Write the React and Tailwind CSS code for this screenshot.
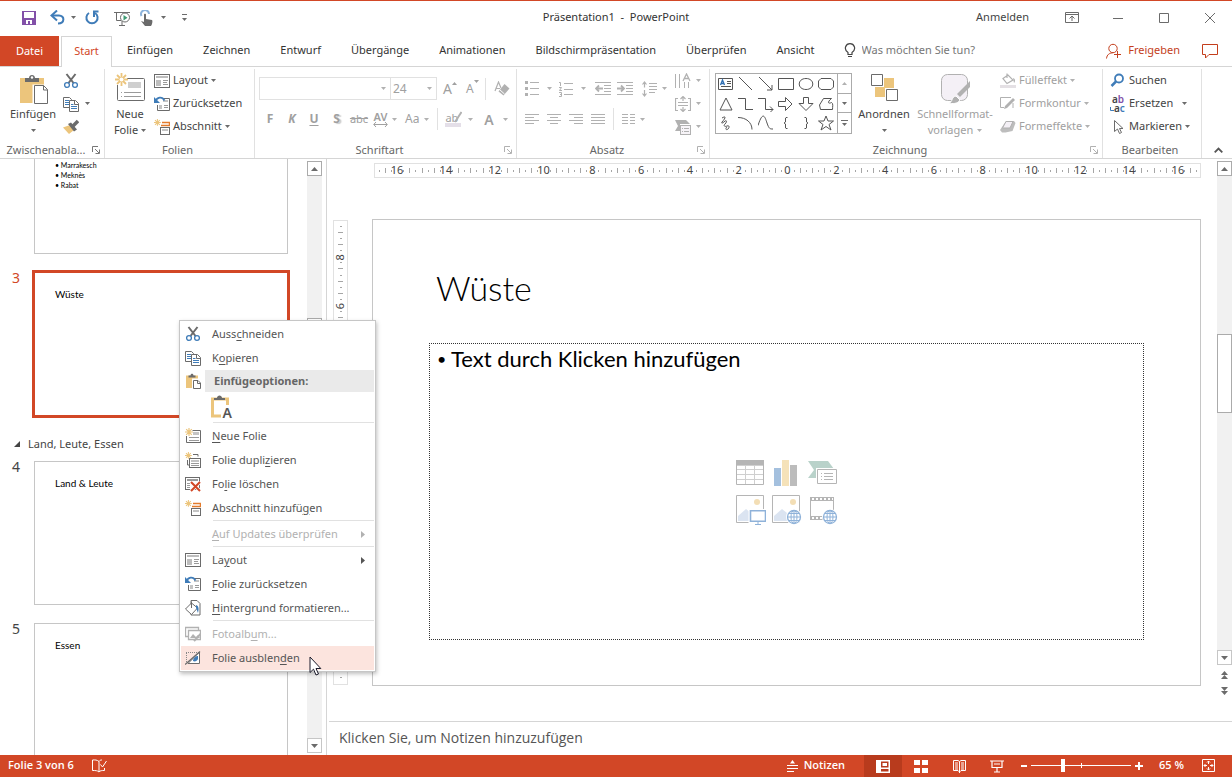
import React, { useState } from 'react';

const tabs = ['Einfügen', 'Zeichnen', 'Entwurf', 'Übergänge', 'Animationen', 'Bildschirmpräsentation', 'Überprüfen', 'Ansicht'];

const Icon = ({ w = 16, h = 16, className = '', children }) => (
  <svg width={w} height={h} viewBox={`0 0 ${w} ${h}`} fill="none" className={`shrink-0 ${className}`} aria-hidden="true">
    {children}
  </svg>
);

const Caret = ({ className = 'text-[#6b6b6b]' }) => (
  <Icon w={5} h={3} className={className}>
    <path d="M0 0h5L2.500 3z" fill="currentColor" />
  </Icon>
);

/* ---------- shared icons ---------- */

const CutIcon = () => (
  <Icon>
    <path d="M3.500 1l7 9M12.500 1l-7 9" stroke="#6b6b6b" strokeWidth="2" />
    <circle cx="4" cy="12" r="2.4" stroke="#3f7cb8" strokeWidth="1.3" />
    <circle cx="12" cy="12" r="2.4" stroke="#3f7cb8" strokeWidth="1.3" />
  </Icon>
);

const CopyIcon = () => (
  <Icon>
    <path d="M.5 1.500h6l2 2v8h-8z" fill="#fff" stroke="#6b6b6b" />
    <path d="M2 4.500h4M2 6.500h4M2 8.500h4" stroke="#3f7cb8" />
    <path d="M6.500 4.500h6l3 3v8h-9z" fill="#fff" stroke="#6b6b6b" />
    <path d="M11.500 4.500v4H15" stroke="#6b6b6b" />
    <path d="M8 8.500h2.500M8 10.500h6M8 12.500h6" stroke="#3f7cb8" />
  </Icon>
);

const PainterIcon = () => (
  <Icon>
    <path d="M0 8.500l7-2.500 4 5-5 4z" fill="#ecc57c" />
    <path d="M5 5l3-1.500 6 7-3 2z" fill="#6b6b6b" />
    <path d="M10 7l5-5" stroke="#6b6b6b" strokeWidth="3.500" />
  </Icon>
);

const PasteBigIcon = () => (
  <Icon w={30} h={32}>
    <path d="M2 5h24v25H2z" fill="#ecc57c" />
    <path d="M7 9V5h4c0-4 6-4 6 0h4v4z" fill="#6b6b6b" />
    <circle cx="14" cy="4.500" r="1.200" fill="#fff" />
    <path d="M14.500 11.500h12l4 4v16h-16z" fill="#fff" />
    <path d="M16.500 12.500h9l4 4v14h-13z" fill="#fff" stroke="#6b6b6b" />
    <path d="M25.500 12.500v4.500h4" stroke="#6b6b6b" />
  </Icon>
);

const PasteIcon = () => (
  <Icon>
    <path d="M1 2.500h12v12.500H1z" fill="#ecc57c" />
    <path d="M3.500 4.500V2.500h2c0-2.500 3-2.500 3 0h2v2z" fill="#6b6b6b" />
    <path d="M7 5.500h9v10.500H7z" fill="#fff" />
    <path d="M8.500 7.500h4.500l2.500 2.500v5.500h-7z" fill="#fff" stroke="#6b6b6b" />
    <path d="M12.500 7.500v3h3" stroke="#6b6b6b" />
  </Icon>
);

const Star = () => (
  <path d="M4 0v8M0 4h8M1.200 1.200l5.600 5.600M6.800 1.200L1.200 6.800" stroke="#ecc57c" strokeWidth="1.200" />
);

const NewSlideBigIcon = () => (
  <Icon w={31} h={28}>
    <rect x="2.500" y="5.500" width="27" height="22" rx="1" stroke="#6b6b6b" />
    <path d="M13 9h13v6H13z" fill="#cfcfcf" />
    <path d="M6 19.500h1M9 19.500h17M6 23.500h1M9 23.500h17" stroke="#9a9a9a" />
    <path d="M0 0h12v12H0z" fill="#fff" />
    <path d="M6.500 0v13M0 6.500h13M2 2l9 9M11 2l-9 9" stroke="#ecc57c" strokeWidth="1.800" />
    <circle cx="6.500" cy="6.500" r="2" fill="#fff" />
  </Icon>
);

const NewSlideIcon = () => (
  <Icon>
    <path d="M7.500 2.500h8v12h-14V8" stroke="#6b6b6b" />
    <path d="M8 4h6v3H8z" fill="#c4c4c4" />
    <path d="M4 9.500h10M4 12.500h10" stroke="#9a9a9a" />
    <Star />
  </Icon>
);

const LayoutIcon = () => (
  <Icon>
    <rect x=".5" y="1.500" width="15" height="13" stroke="#6b6b6b" />
    <path d="M2 3h12v2H2zM2 7h5v6H2z" fill="#bdbdbd" />
    <path d="M9 7.500h5M9 9.500h4M9 11.500h5" stroke="#9a9a9a" />
  </Icon>
);

const ResetIcon = () => (
  <Icon>
    <path d="M9 2.500h6.500v12h-12V9" stroke="#6b6b6b" />
    <path d="M9 4h5v2H9zM5 9h3v4H5z" fill="#c4c4c4" />
    <path d="M10 9.500h4M10 11.500h4" stroke="#9a9a9a" />
    <path d="M1.500 5.500C3 1 8 0 10.500 4.500" stroke="#3f7cb8" strokeWidth="1.800" />
    <path d="M0 1v6h6z" fill="#3f7cb8" />
  </Icon>
);

const SectionIcon = () => (
  <Icon>
    <path d="M8 3.500h7.500v3H7" stroke="#e37b2c" strokeWidth="1.400" />
    <rect x="6.500" y="8.500" width="9" height="7" stroke="#6b6b6b" />
    <path d="M8 10h6v2H8z" fill="#c4c4c4" />
    <g transform="scale(.85)"><Star /></g>
  </Icon>
);

/* ---------- title bar ---------- */

const TitleBar = () => (
  <header className="grid h-[35px] grid-cols-[1fr_auto_1fr] items-center pb-[2px]">
    <div className="flex items-center pl-[21px]">
      <button aria-label="Speichern">
        <Icon>
          <path d="M1 1h14v14H1z" fill="#8250a8" />
          <path d="M3 2h10v6H3zM5 10h6v4H9v-3H7v3H5z" fill="#fff" />
        </Icon>
      </button>
      <button aria-label="Rückgängig" className="ml-[13px] flex items-center gap-[5px]">
        <Icon w={16}>
          <path d="M3 5.500h6c6 0 6 8-1 8" stroke="#3f7cb8" strokeWidth="2" />
          <path d="M7 .5L1.500 5.500 7 10.500" stroke="#3f7cb8" strokeWidth="2" />
        </Icon>
        <Caret />
      </button>
      <button aria-label="Wiederholen" className="ml-[8px]">
        <Icon>
          <path d="M5 3A5.600 5.600 0 1 0 11 3" stroke="#3f7cb8" strokeWidth="2" />
          <path d="M9 1.500h5.500M10 1v6" stroke="#3f7cb8" strokeWidth="2" />
        </Icon>
      </button>
      <button aria-label="Von Beginn an" className="ml-[14px]">
        <Icon w={18}>
          <path d="M0 2.500h16M2.500 3v7.500H7M5 15.500h6M8 11v4" stroke="#6b6b6b" />
          <circle cx="11" cy="7.500" r="4.500" fill="#fff" stroke="#6b6b6b" />
          <path d="M9.500 5v5.500l4-2.700z" fill="#3f9b74" />
        </Icon>
      </button>
      <button aria-label="Touch-/Mausmodus" className="ml-[8px] flex items-center gap-[5px]">
        <Icon>
          <path d="M1.500 6A4 4 0 1 1 9 4" stroke="#8db4dc" strokeWidth="2" />
          <path d="M4 4.500c0-1 2-1 2 0V9l6 1c1 1 0 5-1 6H5L1 11l3 1z" fill="#6b6b6b" />
        </Icon>
        <Caret />
      </button>
      <button aria-label="Schnellzugriff anpassen" className="ml-[16px] flex flex-col items-center gap-[3px]">
        <span className="h-px w-[5px] bg-[#6b6b6b]" />
        <Caret />
      </button>
    </div>
    <h1 className="whitespace-pre">Präsentation1  -  PowerPoint</h1>
    <div className="flex items-center justify-end pr-[17px] text-[#6b6b6b]">
      <button className="mr-[36px] text-[#444]">Anmelden</button>
      <button aria-label="Menüband-Anzeigeoptionen">
        <Icon w={14} h={11}>
          <path d="M.5.5h13v10H.5zM0 2.500h14M7 4v5M4.500 6.500L7 4l2.500 2.500" stroke="currentColor" />
        </Icon>
      </button>
      <button aria-label="Minimieren" className="ml-[34px]"><Icon w={10} h={10}><path d="M0 5.500h10" stroke="currentColor" /></Icon></button>
      <button aria-label="Maximieren" className="ml-[36px]"><Icon w={10} h={10}><path d="M.5.5h9v9h-9z" stroke="currentColor" /></Icon></button>
      <button aria-label="Schließen" className="ml-[36px]"><Icon w={10} h={10}><path d="M0 0l10 10M10 0L0 10" stroke="currentColor" /></Icon></button>
    </div>
  </header>
);

const TabBar = () => (
  <nav className="flex h-[30px]">
    <button className="mr-[2px] w-[59px] bg-[#d24726] text-white">Datei</button>
    <button className="relative -mb-px w-[51px] border border-b-0 border-[#d5d5d5] bg-white pb-[2px] text-[#d24726]">Start</button>
    <div className="flex gap-[30px] pb-px pl-[15px]">
      {tabs.map((tab) => (
        <button key={tab}>{tab}</button>
      ))}
    </div>
    <label className="ml-[29px] flex flex-1 items-center gap-[6px] pb-px">
      <Icon w={12} h={15}>
        <path d="M4 11.500V9.500C-1 6 2 .7 6 .7s7 5.300 2 8.800v2zM4 13.500h4" stroke="#444" strokeWidth="1.200" />
      </Icon>
      <input type="text" aria-label="Was möchten Sie tun?" placeholder="Was möchten Sie tun?" className="min-w-0 flex-1 outline-none placeholder:text-[#767676]" />
    </label>
    <button className="mr-[22px] flex items-center gap-[7px] pb-px text-[#c43e1c]">
      <Icon w={15} h={16}>
        <circle cx="7" cy="5.500" r="4.200" stroke="currentColor" />
        <path d="M.5 15.500c.5-4 3-5.500 6-5.500M8 11.500h7M11.500 8v7" stroke="currentColor" />
      </Icon>
      Freigeben
    </button>
    <button aria-label="Kommentare" className="mr-[14px] text-[#c43e1c]">
      <Icon w={16} h={15}><path d="M.5.5h15v10H7l-3.500 3.500v-3.500h-3z" stroke="currentColor" /></Icon>
    </button>
  </nav>
);

/* ---------- ribbon ---------- */

const Launcher = ({ label, className = 'text-[#777]' }) => (
  <button aria-label={label} className={className}>
    <Icon w={8} h={8}>
      <path d="M.5 6V.5H6M3 3l4 4M7.500 3.500v4h-4" stroke="currentColor" />
    </Icon>
  </button>
);

const Group = ({ label, launcher, launcherClass, className, children }) => (
  <section className={`flex flex-col border-r border-[#e1e1e1] ${className}`}>
    <div className="flex h-[73px]">{children}</div>
    <div className="flex h-[16px] items-center pr-[4px]">
      <span className="min-w-0 flex-1 whitespace-nowrap text-center leading-[16px] text-[#666]">{label}</span>
      {launcher && <Launcher label={launcher} className={launcherClass} />}
    </div>
  </section>
);

const RowButton = ({ icon, label, caret, wide, disabled }) => (
  <button disabled={disabled} className={`flex h-[23px] items-center gap-[3px] whitespace-nowrap ${disabled ? 'text-[#a0a0a0]' : 'text-[#444]'}`}>
    {icon}
    {label}
    {caret && <Caret className={`${wide ? 'ml-[6px]' : ''} ${disabled ? 'text-[#b1b1b1]' : 'text-[#6b6b6b]'}`} />}
  </button>
);

const ClipboardGroup = () => (
  <Group label="Zwischenabla..." launcher="Zwischenablage" className="w-[105px]">
    <button className="ml-[8px] mt-[4px] flex w-[50px] flex-col items-center self-start whitespace-nowrap">
      <PasteBigIcon />
      <span className="mt-px leading-[16px]">Einfügen</span>
      <Caret className="mt-[7px] text-[#6b6b6b]" />
    </button>
    <div className="ml-[5px] flex flex-col">
      <button aria-label="Ausschneiden" className="flex h-[23px] items-center"><CutIcon /></button>
      <button aria-label="Kopieren" className="flex h-[23px] items-center gap-[6px]"><CopyIcon /><Caret /></button>
      <button aria-label="Format übertragen" className="flex h-[23px] items-center"><PainterIcon /></button>
    </div>
  </Group>
);

const SlidesGroup = () => (
  <Group label="Folien" className="w-[150px]">
    <button className="ml-[6px] mt-[4px] flex w-[38px] flex-col items-center self-start whitespace-nowrap leading-[16px]">
      <NewSlideBigIcon />
      <span className="mt-[5px]">Neue</span>
      <span className="flex items-center gap-[3px]">Folie <Caret /></span>
    </button>
    <div className="ml-[5px] flex flex-col">
      <RowButton icon={<LayoutIcon />} label="Layout" caret />
      <RowButton icon={<ResetIcon />} label="Zurücksetzen" />
      <RowButton icon={<SectionIcon />} label="Abschnitt" caret />
    </div>
  </Group>
);

const FontGroup = () => (
  <Group label="Schriftart" launcher="Schriftart" launcherClass="text-[#b1b1b1]" className="w-[262px] text-[#a0a0a0]">
    <div className="flex flex-col pl-[4px]">
      <div className="mt-[8px] flex h-[23px] items-center">
        <span className="flex h-[23px] w-[132px] items-center border border-[#e1e1e1] pr-[4px]">
          <select aria-label="Schriftart" disabled className="flex-1 appearance-none"><option></option></select>
          <Caret className="text-[#b1b1b1]" />
        </span>
        <span className="-ml-px flex h-[23px] w-[47px] items-center border border-[#e1e1e1] pl-[2px] pr-[4px]">
          <select aria-label="Schriftgrad" disabled className="min-w-0 flex-1 appearance-none text-[12px]"><option>24</option></select>
          <Caret className="text-[#b1b1b1]" />
        </span>
        <button disabled aria-label="Schriftgrad vergrößern" className="ml-[6px] flex items-start text-[14px] leading-[16px]">A<Icon w={5} h={3} className="mt-px"><path d="M0 3h5L2.500 0z" fill="currentColor" /></Icon></button>
        <button disabled aria-label="Schriftgrad verkleinern" className="ml-[9px] flex items-start text-[12px] leading-[16px]">A<Caret className="-mt-px text-[#a0a0a0]" /></button>
        <span className="ml-[6px] h-[22px] w-px bg-[#e1e1e1]" />
        <button disabled aria-label="Formatierung löschen" className="ml-[8px]">
          <Icon>
            <path d="M1 10L4.500 1 7 7M2 7.500h4" stroke="#b1b1b1" strokeWidth="1.200" />
            <path d="M10.500 3l5 4.500-6 7-5-4z" fill="#b1b1b1" />
            <path d="M5.500 8.500l5 4.500" stroke="#fff" />
          </Icon>
        </button>
      </div>
      <div className="mt-[7px] flex h-[24px] items-center text-[12px]">
        <button disabled className="w-[22px] font-bold">F</button>
        <button disabled className="w-[22px] font-bold italic">K</button>
        <button disabled className="w-[22px] font-bold underline underline-offset-2">U</button>
        <button disabled className="w-[23px] font-bold [text-shadow:2px_1px_1px_#ccc]">S</button>
        <button disabled className="w-[22px] text-[11px] line-through">abc</button>
        <button disabled className="ml-[3px] flex items-center gap-[4px]">
          <span className="flex flex-col items-center text-[11px] font-semibold leading-[11px]">
            AV
            <Icon w={15} h={5}><path d="M1 2.500h13M3 0L.7 2.500 3 5M12 0l2.300 2.500L12 5" stroke="currentColor" /></Icon>
          </span>
          <Caret className="text-[#b1b1b1]" />
        </button>
        <button disabled className="ml-[8px] flex items-center gap-[5px]">Aa<Caret className="text-[#b1b1b1]" /></button>
        <span className="ml-[8px] h-[22px] w-px bg-[#e1e1e1]" />
        <button disabled aria-label="Texthervorhebungsfarbe" className="ml-[7px] flex items-center gap-[6px]">
          <span className="flex flex-col">
            <span className="flex h-[12px] items-center text-[11px] leading-[11px]">
              ab
              <Icon w={8} h={12} className="-ml-[4px]"><path d="M7.500 1L1 11" stroke="#b1b1b1" strokeWidth="2" /></Icon>
            </span>
            <span className="h-[4px] w-[16px] bg-[#e4dfe8]" />
          </span>
          <Caret className="text-[#b1b1b1]" />
        </button>
        <button disabled className="ml-[11px] flex items-center gap-[9px] text-[14px] font-semibold">A<Caret className="text-[#b1b1b1]" /></button>
      </div>
    </div>
  </Group>
);

const Lines = ({ d }) => (
  <Icon w={15} h={12}><path d={d} stroke="#b1b1b1" /></Icon>
);

const ParagraphGroup = () => (
  <Group label="Absatz" launcher="Absatz" launcherClass="text-[#b1b1b1]" className="w-[193px] text-[#b1b1b1]">
    <div className="flex flex-col pl-[8px]">
      <div className="mt-[8px] flex h-[23px] items-center">
        <button disabled aria-label="Aufzählungszeichen" className="flex items-center gap-[6px]">
          <Icon h={15}>
            <path d="M0 0h3v3H0zM0 6h3v3H0zM0 12h3v3H0z" fill="currentColor" />
            <path d="M5 1.500h9M5 7.500h9M5 13.500h9" stroke="currentColor" />
          </Icon>
          <Caret className="text-[#b1b1b1]" />
        </button>
        <button disabled aria-label="Nummerierung" className="ml-[7px] flex items-center gap-[6px]">
          <Icon h={16}>
            <path d="M0 1.500h1.500V5M0 6.500h2.500L.5 9.500h2.500M0 11.500h2.500v4H0M1 13.500h1.500" stroke="currentColor" />
            <path d="M5 2.500h9M5 8.500h9M5 13.500h9" stroke="currentColor" />
          </Icon>
          <Caret className="text-[#b1b1b1]" />
        </button>
        <button disabled aria-label="Listenebene verringern" className="ml-[9px]">
          <Icon h={13}>
            <path d="M0 .5h16M9 3.500h7M9 6.500h7M0 12.500h16M9 9.500h7" stroke="currentColor" />
            <path d="M1 6.500h7M4 3.500L1 6.500l3 3" stroke="currentColor" strokeWidth="1.800" />
          </Icon>
        </button>
        <button disabled aria-label="Listenebene erhöhen" className="ml-[6px]">
          <Icon h={13}>
            <path d="M0 .5h16M9 3.500h7M9 6.500h7M0 12.500h16M9 9.500h7" stroke="currentColor" />
            <path d="M0 6.500h7M4 3.500l3 3-3 3" stroke="currentColor" strokeWidth="1.800" />
          </Icon>
        </button>
        <button disabled aria-label="Zeilenabstand" className="ml-[9px] flex items-center gap-[5px]">
          <Icon w={15} h={16}>
            <path d="M2.500 1v5.500M.5 3.500l2-2.500 2 2.500M2.500 9v6M.5 12.500l2 2.500 2-2.500M7 2.500h8M7 5.500h8M7 8.500h8M7 11.500h6" stroke="currentColor" strokeWidth="1.200" />
          </Icon>
          <Caret className="text-[#b1b1b1]" />
        </button>
      </div>
      <div className="mt-[7px] flex h-[24px] items-center gap-[7px]">
        <button disabled aria-label="Linksbündig"><Lines d="M0 1.500h14M0 4.500h9M0 7.500h14M0 10.500h9" /></button>
        <button disabled aria-label="Zentriert"><Lines d="M0 1.500h14M3 4.500h8M0 7.500h14M3 10.500h8" /></button>
        <button disabled aria-label="Rechtsbündig"><Lines d="M0 1.500h14M5 4.500h9M0 7.500h14M5 10.500h9" /></button>
        <button disabled aria-label="Blocksatz"><Lines d="M0 1.500h14M0 4.500h14M0 7.500h14M0 10.500h14" /></button>
        <span className="h-[22px] w-px bg-[#e1e1e1]" />
        <button disabled aria-label="Spalten" className="flex items-center gap-[4px]">
          <Lines d="M1 1.500h6M9 1.500h5M1 4.500h6M9 4.500h5M1 7.500h6M9 7.500h5M1 10.500h6M9 10.500h5" />
          <Caret className="text-[#b1b1b1]" />
        </button>
      </div>
    </div>
    <div className="ml-[8px] flex flex-col">
      <button disabled aria-label="Textrichtung" className="flex h-[23px] items-center gap-[5px]">
        <Icon>
          <path d="M.5 1v14M4.500 1v14M9.500 9v6M13.500 9v6" stroke="currentColor" />
          <path d="M8 8l3.500-7L15 8M9 5.500h5" stroke="currentColor" strokeWidth="1.300" />
        </Icon>
        <Caret className="text-[#b1b1b1]" />
      </button>
      <button disabled aria-label="Text ausrichten" className="flex h-[23px] items-center gap-[5px]">
        <Icon>
          <path d="M3 2.500H.5v12H3M13 2.500h2.500v12H13M3 6.500h10M3 9.500h10M8 0v5M5.500 3L8 .5 10.500 3M8 11v5M5.500 13l2.500 2.500 2.500-2.500" stroke="currentColor" strokeWidth="1.200" />
        </Icon>
        <Caret className="text-[#b1b1b1]" />
      </button>
      <button disabled aria-label="In SmartArt konvertieren" className="flex h-[23px] items-center gap-[5px]">
        <Icon>
          <path d="M0 1h11l4 4H5v7H0l3-5z" fill="currentColor" />
          <rect x="5.500" y="6.500" width="10" height="9" fill="#f7f4f8" stroke="currentColor" />
          <path d="M7 9.500h1M9 9.500h5M7 12.500h1M9 12.500h5" stroke="currentColor" />
        </Icon>
        <Caret className="text-[#b1b1b1]" />
      </button>
    </div>
  </Group>
);

const shapes = [
  { name: 'Textfeld', d: 'M.5 2.500h14v11H.5zM9 5.500h4M9 7.500h4M3 10.500h10', blue: 'M2.500 9l2-5 2 5M3 7.500h3' },
  { name: 'Linie', d: 'M1 1l13 13' },
  { name: 'Pfeil', d: 'M1 1l13 13M14 9v5H9' },
  { name: 'Rechteck', d: 'M.5 2.500h15v11H.5z' },
  { name: 'Ellipse', d: 'M8 2.500c9 0 9 11 0 11s-9-11 0-11z' },
  { name: 'Abgerundetes Rechteck', d: 'M3 2.500h10l2.500 2.500v6L13 13.500H3L.5 11V5z' },
  { name: 'Dreieck', d: 'M8 2l6 12H2z' },
  { name: 'Winkel', d: 'M0 2.500h7.500v11H15' },
  { name: 'Winkel mit Pfeil', d: 'M0 2.500h7.500v11H15M12 10.500l3 3-3 3' },
  { name: 'Pfeil rechts', d: 'M.5 5.500h7v-4L14 8l-6.500 6.500v-4h-7z' },
  { name: 'Pfeil unten', d: 'M5.500 1.500h5v6H15l-7 7-7-7h4.500z' },
  { name: 'Freihandform', d: 'M2.500 13.500L1.500 9l4-6.500h8c-4 3-4 6 0 4 2 1 1 4 1 7z' },
  { name: 'Skizze', d: 'M4 3c5-3 3 1 0 4-1 2 1 1 3-1 2-1 2 1 0 3s0 3 2 2 3 1 1 3-3-1-1-2' },
  { name: 'Bogen', d: 'M0 2.500c8 0 14 5 14 12' },
  { name: 'Kurve', d: 'M0 10.500C5-5 7 2 9 8s3 6 6 6' },
  { name: 'Geschweifte Klammer links', d: 'M9.500 2.500H8L7.500 3v4L6 8l1.500 1v4l.5.500h1.500' },
  { name: 'Geschweifte Klammer rechts', d: 'M6.500 2.500H8l.5.500v4L10 8 8.500 9v4l-.5.500H6.500' },
  { name: 'Stern', d: 'M8 1l2 5h5.500l-4.500 3.500 2 5.500-5-3.500L3 15l2-5.500L.5 6H6z' },
];

const DrawingGroup = () => (
  <Group label="Zeichnung" launcher="Zeichnung" launcherClass="text-[#b1b1b1]" className="w-[393px]">
    <div className="ml-[5px] mt-[4px] flex h-[61px] border border-[#ababab]">
      <div className="grid grid-cols-6 grid-rows-3 content-start">
        {shapes.map((shape) => (
          <button key={shape.name} aria-label={shape.name} className="flex h-[20px] w-[20px] items-center justify-center">
            <Icon>
              <path d={shape.d} stroke="#555" />
              {shape.blue && <path d={shape.blue} stroke="#2f6fb3" strokeWidth="1.300" />}
            </Icon>
          </button>
        ))}
      </div>
      <div className="ml-px flex w-[14px] flex-col divide-y divide-[#ababab] border-l border-[#ababab]">
        <button disabled aria-label="Zeile nach oben" className="flex h-[20px] items-center justify-center"><Icon w={5} h={3}><path d="M0 3h5L2.500 0z" fill="#b1b1b1" /></Icon></button>
        <button aria-label="Zeile nach unten" className="flex h-[19px] items-center justify-center"><Caret /></button>
        <button aria-label="Weitere Formen" className="flex flex-1 flex-col items-center justify-center gap-[2px]"><span className="h-px w-[7px] bg-[#6b6b6b]" /><Caret /></button>
      </div>
    </div>
    <button className="ml-[4px] mt-[4px] flex w-[56px] flex-col items-center self-start whitespace-nowrap">
      <Icon w={28} h={32}>
        <path d="M14 5h10v10H14zM5 14h10v10H5z" fill="#ecc57c" />
        <path d="M1.500 1.500h11v11h-11zM16.500 16.500h11v11h-11z" fill="#fff" stroke="#6b6b6b" />
      </Icon>
      <span className="mt-px leading-[16px]">Anordnen</span>
      <Caret className="mt-[7px] text-[#6b6b6b]" />
    </button>
    <button disabled className="ml-[3px] mt-[4px] flex w-[80px] flex-col items-center self-start whitespace-nowrap leading-[16px] text-[#a0a0a0]">
      <Icon w={31} h={32}>
        <rect x="1.500" y="1.500" width="26" height="26" rx="6" fill="#f4f0f6" stroke="#b1b1b1" />
        <path d="M30 8v6L20 24l-3-3z" fill="#b1b1b1" />
        <path d="M9 30c4-1 2-6 7-7l4 4c-2 4-8 4-11 3z" fill="#b1b1b1" stroke="#fff" />
      </Icon>
      <span className="mt-px">Schnellformat-</span>
      <span className="flex items-center gap-[4px]">vorlagen <Caret className="text-[#b1b1b1]" /></span>
    </button>
    <div className="ml-[5px] flex flex-col">
      <RowButton disabled caret label="Fülleffekt" icon={
        <Icon>
          <path d="M3 5.500L8 2l5 5-6 3.500zM7 5V.5" stroke="#b1b1b1" strokeWidth="1.200" />
          <path d="M13 5c3 1 2 4 1 5z" fill="#b1b1b1" />
          <path d="M0 12h16v3H0z" fill="#e4e0e4" />
        </Icon>
      } />
      <RowButton disabled caret label="Formkontur" icon={
        <Icon>
          <path d="M11 1.500H.5v10H4M13 7v5" stroke="#b1b1b1" />
          <path d="M5 10l8-8 2 2-8 8-3 1z" fill="#b1b1b1" />
        </Icon>
      } />
      <RowButton disabled caret label="Formeffekte" icon={
        <Icon>
          <path d="M6 2h8l1.500 2-3 8-7 1.500H2L0 11z" fill="#bdbdbd" />
          <path d="M6 2.500h7l-3 6.500H2.500z" fill="#f4f0f6" stroke="#b1b1b1" />
        </Icon>
      } />
    </div>
  </Group>
);

const EditGroup = () => (
  <Group label="Bearbeiten" className="w-[99px]">
    <div className="ml-[7px] flex flex-col">
      <RowButton label="Suchen" icon={
        <Icon>
          <circle cx="9" cy="5.500" r="4" stroke="#3f7cb8" strokeWidth="1.800" />
          <path d="M6 8.500L1.500 13" stroke="#3f7cb8" strokeWidth="2.500" />
        </Icon>
      } />
      <RowButton caret wide label="Ersetzen" icon={
        <span className="flex w-[16px] flex-col text-[10px] font-semibold leading-[9px]">
          <span>a<span className="text-[#8250a8]">b</span></span>
          <span className="flex items-end text-[#3f7cb8]">
            <Icon w={4} h={6}><path d="M.5 0v3.500H4" stroke="currentColor" /></Icon>
            <span className="text-[#444]">a</span>c
          </span>
        </span>
      } />
      <RowButton caret label="Markieren" icon={
        <Icon><path d="M4.500 1.500v11l3-2.500 2 4.500 2-1-2-4h3.500z" stroke="#6b6b6b" /></Icon>
      } />
    </div>
  </Group>
);

const Ribbon = () => (
  <div className="flex h-[93px] border-y border-[#d5d5d5] pt-[2px] text-[#444]">
    <ClipboardGroup />
    <SlidesGroup />
    <FontGroup />
    <ParagraphGroup />
    <DrawingGroup />
    <EditGroup />
    <button aria-label="Menüband reduzieren" className="ml-auto mr-[9px] self-end pb-[5px]">
      <Icon w={9} h={6}><path d="M.7 5.300L4.500 1.500l3.800 3.800" stroke="#555" strokeWidth="1.800" /></Icon>
    </button>
  </div>
);

/* ---------- slide list ---------- */

const Scrollbar = ({ label, thumb }) => (
  <div className="flex w-[15px] flex-1 flex-col bg-[#f1f1f1]">
    <button aria-label={`${label} nach oben`} className="flex h-[15px] items-center justify-center border border-[#ababab] bg-white">
      <Icon w={7} h={4}><path d="M0 4h7L3.500 0z" fill="#6b6b6b" /></Icon>
    </button>
    <div className="flex-1"><div className={`border border-[#ababab] bg-white ${thumb}`} /></div>
    <button aria-label={`${label} nach unten`} className="flex h-[15px] items-center justify-center border border-[#c6c6c6] bg-white">
      <Icon w={7} h={4}><path d="M0 0h7L3.500 4z" fill="#6b6b6b" /></Icon>
    </button>
  </div>
);

const Thumb = ({ number, title, selected, children }) => (
  <div className="flex">
    <span className={`w-[32px] shrink-0 pl-[12px] text-[14px] leading-[16px] ${selected ? 'text-[#d24726]' : 'text-[#444]'}`}>{number}</span>
    <div className={selected ? 'border-[3px] border-[#d24726]' : 'p-[2px]'}>
      <div className={`pl-[20px] pt-[14px] font-[Lato,sans-serif] text-black ${selected ? 'h-[142px] w-[252px]' : 'h-[144px] w-[254px] border border-[#c6c6c6]'}`}>
        <div className="text-[10px] leading-[14px]">{title}</div>
        {children}
      </div>
    </div>
  </div>
);

const SlideList = () => (
  <aside className="flex w-[327px] shrink-0 border-r border-[#d5d5d5]">
    <div className="w-[307px] overflow-hidden">
      <div className="-mt-[51px] flex flex-col gap-[14px]">
        <Thumb number="2" title="Städte">
          <ul className="mt-[21px] text-[7px] leading-[10px]">
            <li>• Marrakesch</li>
            <li>• Meknès</li>
            <li>• Rabat</li>
          </ul>
        </Thumb>
        <Thumb number="3" title="Wüste" selected />
        <button className="-mb-[11px] flex h-[24px] items-center gap-[7px] pl-[13px] text-[#444]">
          <Icon w={8} h={8}><path d="M7 1v6H1z" fill="#444" /></Icon>
          Land, Leute, Essen
        </button>
        <Thumb number="4" title="Land &amp; Leute" />
        <Thumb number="5" title="Essen" />
      </div>
    </div>
    <div className="flex pb-[2px] pt-[2px]">
      <Scrollbar label="Folien" thumb="mt-[142px] h-[110px]" />
    </div>
  </aside>
);

/* ---------- editor ---------- */

const Ruler = ({ length, max, vertical }) => {
  const mid = length / 2;
  const step = 12.2 / 2;
  const ticks = [];
  for (let i = 1; i * step < mid; i++) {
    if (i % 8 !== 0) ticks.push(i, -i);
  }
  const numbers = [];
  for (let n = -max; n <= max; n += 2) numbers.push(n);

  return (
    <svg
      width={vertical ? 13 : length}
      height={vertical ? length : 13}
      viewBox={vertical ? `0 0 13 ${length}` : `0 0 ${length} 13`}
      className="shrink-0 overflow-visible"
      aria-hidden="true"
    >
      <g transform={vertical ? `translate(0 ${length}) rotate(-90)` : undefined}>
        {ticks.map((i) => {
          const x = Math.round(mid + i * step);
          const long = i % 2 === 0;
          return <rect key={i} x={x} y={long ? 4 : 6} width="1" height={long ? 5 : 2} fill="#a6a6a6" />;
        })}
        {numbers.map((n) => (
          <text key={n} x={mid + n * step * 4} y="10" textAnchor="middle" fontSize="11" fill="#444">
            {Math.abs(n)}
          </text>
        ))}
      </g>
    </svg>
  );
};

const Globe = ({ x, y }) => (
  <g transform={`translate(${x} ${y})`} stroke="#8fb2d9">
    <circle cx="7" cy="7" r="8" fill="#fff" stroke="none" />
    <circle cx="7" cy="7" r="6.500" strokeWidth="1.300" />
    <ellipse cx="7" cy="7" rx="3" ry="6.500" />
    <path d="M7 .5v13M.5 7h13M2 3.500h10M2 10.500h10" />
  </g>
);

const Picture = () => (
  <g>
    <path d="M.5.5h27v27H.5z" fill="#fff" stroke="#b5b5b5" />
    <circle cx="21" cy="7" r="3" fill="#f3deb5" />
    <path d="M2 26v-5l8-7 5 4 8 8z" fill="#dbe4f1" />
  </g>
);

const ContentIcons = () => (
  <div className="grid grid-cols-3 gap-[6px]">
    <button aria-label="Tabelle einfügen">
      <Icon w={30} h={30}>
        <path d="M1 6.500h26M.5 10.500h27M.5 15.500h27M.5 20.500h27M9.500 5v20M18.500 5v20" stroke="#cfcfcf" />
        <path d="M.5 1.500h27v24H.5z" stroke="#b5b5b5" />
        <path d="M0 1h28v5H0z" fill="#b5b5b5" />
      </Icon>
    </button>
    <button aria-label="Diagramm einfügen">
      <Icon w={30} h={30}>
        <path d="M2 9h7v18H2z" fill="#a4c0de" />
        <path d="M10 1h7v26h-7z" fill="#f5e2b9" />
        <path d="M18 6h7v21h-7z" fill="#bcbcbc" />
      </Icon>
    </button>
    <button aria-label="SmartArt einfügen">
      <Icon w={30} h={30}>
        <path d="M0 2h20l6 8H10v9H0l6-8z" fill="#b9d2ca" />
        <path d="M8 9h22v17H8z" fill="#fff" />
        <path d="M9.500 10.500h19v14h-19z" fill="#fff" stroke="#b5b5b5" />
        <path d="M13 14.500h1M16 14.500h9M13 17.500h1M16 17.500h9M13 20.500h1M16 20.500h9" stroke="#b5b5b5" />
      </Icon>
    </button>
    <button aria-label="Bilder einfügen">
      <Icon w={30} h={30}>
        <Picture />
        <path d="M12.500 14h18v14h-18z" fill="#fff" />
        <path d="M14.500 15.800h15v10.400h-15z" fill="#fff" stroke="#8fb2d9" strokeWidth="1.600" />
        <path d="M22 27v2.500M19 29.500h6" stroke="#8fb2d9" />
      </Icon>
    </button>
    <button aria-label="Onlinebilder einfügen">
      <Icon w={30} h={30}><Picture /><Globe x={15} y={15} /></Icon>
    </button>
    <button aria-label="Video einfügen">
      <Icon w={30} h={30}>
        <path d="M2.500 2.500h23v22h-23z" stroke="#b5b5b5" />
        <path d="M2 2h24v4H2zM2 21h24v4H2z" fill="#b5b5b5" />
        <path d="M4 4h21M4 23h21" stroke="#fff" strokeWidth="2" strokeDasharray="2 2" />
        <Globe x={15} y={15} />
      </Icon>
    </button>
  </div>
);

const Editor = () => (
  <main className="flex min-w-0 flex-1 flex-col">
    <div className="flex min-h-0 flex-1">
      <div className="flex min-w-0 flex-1 flex-col pl-[6px] pr-[16px] pt-[4px]">
        <div className="ml-[41px] flex h-[15px] shrink-0 justify-center border border-[#e1e1e1]">
          <Ruler length={825} max={16} />
        </div>
        <div className="mb-[35px] mt-[41px] flex min-h-0 flex-1 gap-[24px]">
          <div className="my-px flex w-[15px] shrink-0 flex-col justify-center border border-[#e1e1e1]">
            <Ruler length={463} max={8} vertical />
          </div>
          <article className="flex min-w-0 flex-1 flex-col border border-[#c6c6c6] px-[56px] pb-[45px] pt-[38px] font-[Lato,sans-serif] text-black">
            <h2 className="px-[7px] text-[34px] font-light leading-[60px]">Wüste</h2>
            <div className="mt-[25px] grid flex-1 border border-dotted border-[#333]">
              <ul className="px-[7px] text-[22px] leading-[30px] [grid-area:1/1]">
                <li className="flex"><span className="w-[14px] text-[16px]">•</span>Text durch Klicken hinzufügen</li>
              </ul>
              <div className="flex items-center justify-center [grid-area:1/1]">
                <ContentIcons />
              </div>
            </div>
          </article>
        </div>
      </div>
      <div className="flex w-[15px] flex-col pt-[2px] pb-[22px]">
        <Scrollbar label="Folie" thumb="mt-[158px] h-[79px]" />
        <button aria-label="Vorherige Folie" className="mt-[2px] flex h-[16px] items-center justify-center">
          <Icon w={7} h={8}><path d="M0 4h7L3.500 0zM0 8h7L3.500 4z" fill="#6b6b6b" /></Icon>
        </button>
        <button aria-label="Nächste Folie" className="flex h-[16px] items-center justify-center">
          <Icon w={7} h={8}><path d="M0 0h7L3.500 4zM0 4h7L3.500 8z" fill="#6b6b6b" /></Icon>
        </button>
      </div>
    </div>
    <div className="ml-[2px] h-[34px] border-t border-[#d5d5d5]">
      <textarea aria-label="Notizen" rows="1" placeholder="Klicken Sie, um Notizen hinzuzufügen" className="block w-full resize-none px-[10px] pt-[6px] font-['Open_Sans',sans-serif] text-[14px] leading-[20px] outline-none placeholder:text-[#555]" />
    </div>
  </main>
);

/* ---------- context menu ---------- */

const Entry = ({ icon, pre = '', hot, post = '', arrow, disabled, active }) => (
  <button
    role="menuitem"
    disabled={disabled}
    className={`flex h-[24px] w-full items-center pl-[4px] text-left ${active ? 'bg-[#fce4de]' : ''} ${disabled ? 'text-[#b1b1b1]' : 'text-[#555]'}`}
  >
    <span className="flex w-[27px]">{icon}</span>
    <span className="flex-1 whitespace-nowrap">{pre}<u className="underline-offset-2">{hot}</u>{post}</span>
    {arrow && <Icon w={4} h={7} className="mr-[9px]"><path d="M0 0v7l4-3.500z" fill="currentColor" /></Icon>}
  </button>
);

const Divider = () => <div className="ml-[32px] h-[2px] border-t border-[#e1e1e1]" />;

const ContextMenu = () => (
  <div role="menu" className="absolute left-[179px] top-[319px] w-[197px] border border-[#c6c6c6] bg-white p-px shadow-[1px_2px_4px_rgba(0,0,0,0.25)]">
    <Entry icon={<CutIcon />} pre="Auss" hot="c" post="hneiden" />
    <Entry icon={<CopyIcon />} pre="K" hot="o" post="pieren" />
    <div className="flex h-[22px] items-center pl-[4px]">
      <PasteIcon />
      <span className="ml-[4px] flex-1 self-stretch bg-[#eaeaea] pl-[9px] font-bold leading-[22px] text-[#666]">Einfügeoptionen:</span>
    </div>
    <div className="flex h-[30px] items-center pl-[29px]">
      <button role="menuitem" aria-label="Nur den Text übernehmen" className="relative">
        <Icon w={20} h={24}>
          <path d="M2.500 4h15v17h-15z" stroke="#ecc57c" strokeWidth="3" />
          <path d="M4 5V3h3c0-3.500 5-3.500 5 0h3v2z" fill="#6b6b6b" />
          <path d="M11 10h9v14h-9z" fill="#fff" />
        </Icon>
        <span className="absolute -bottom-px right-[-2px] text-[14px] font-semibold leading-[14px] text-[#555]">A</span>
      </button>
    </div>
    <Divider />
    <Entry icon={<NewSlideIcon />} hot="N" post="eue Folie" />
    <Entry pre="Folie dupli" hot="z" post="ieren" icon={
      <Icon>
        <path d="M8 2.500h5v2M2.500 8v5H4" stroke="#6b6b6b" />
        <rect x="4.500" y="6.500" width="11" height="9" stroke="#6b6b6b" />
        <path d="M6 8h8v2H6z" fill="#c4c4c4" />
        <path d="M6 11.500h8M6 13.500h8" stroke="#9a9a9a" />
        <g transform="scale(.85)"><Star /></g>
      </Icon>
    } />
    <Entry pre="Fo" hot="l" post="ie löschen" icon={
      <Icon>
        <rect x=".5" y="1.500" width="14" height="12" stroke="#6b6b6b" />
        <path d="M2 3h11v2H2z" fill="#9a9a9a" />
        <path d="M2 7.500h3M2 9.500h3M2 11.500h3" stroke="#9a9a9a" />
        <path d="M6 6l9 9M15 6l-9 9" stroke="#fff" strokeWidth="3.500" />
        <path d="M6 6l9 9M15 6l-9 9" stroke="#d24726" strokeWidth="2" />
      </Icon>
    } />
    <Entry icon={<SectionIcon />} pre="Abschnitt hinzufü" hot="g" post="en" />
    <Divider />
    <Entry hot="A" post="uf Updates überprüfen" arrow disabled />
    <Divider />
    <Entry icon={<LayoutIcon />} pre="La" hot="y" post="out" arrow />
    <Entry icon={<ResetIcon />} hot="F" post="olie zurücksetzen" />
    <Entry hot="H" post="intergrund formatieren..." icon={
      <Icon>
        <path d="M6 .5h6l3 3v11.500H6z" fill="#fff" stroke="#6b6b6b" />
        <path d="M.5 9l6-6 6 5-6 6.500z" fill="#fff" stroke="#6b6b6b" />
        <path d="M6.500 8V1.500" stroke="#6b6b6b" />
        <path d="M11 5c3 1 3 4 2 8-1-2-1-4-2-5z" fill="#3f7cb8" />
      </Icon>
    } />
    <Divider />
    <Entry pre="Fotoalb" hot="u" post="m..." disabled icon={
      <Icon>
        <path d="M13.500 4V1.500H.5v9H3M3.500 4.500h12v9h-12z" stroke="#b1b1b1" strokeWidth="1.300" />
        <path d="M5 12l3-4 3 3 2-2 2 3z" fill="#b1b1b1" />
        <path d="M15.500 8L9 15" stroke="#b1b1b1" strokeWidth="2" />
      </Icon>
    } />
    <Entry active pre="Folie ausblen" hot="d" post="en" icon={
      <Icon>
        <path d="M1 2.500h13M1.500 3v10" stroke="#888" strokeDasharray="1 1" />
        <path d="M14.500 2v11.500H3z" fill="#fff" stroke="#6b6b6b" />
        <path d="M0 14.500L15 1.500" stroke="#6b6b6b" strokeWidth="1.300" />
        <path d="M8 11c0-3 3-5 5-5v3c-1 2-3 3-5 2z" fill="#3f7cb8" />
      </Icon>
    } />
    <Icon w={13} h={20} className="absolute left-[129px] top-[335px]">
      <path d="M1 1v15.500l3.500-3.300 2.500 5.800 2.500-1-2.500-5.500h4.800z" fill="#fff" stroke="#1a1a2a" />
    </Icon>
  </div>
);

/* ---------- status bar ---------- */

const StatusBar = () => {
  const [zoom, setZoom] = useState(31);

  return (
    <footer className="flex h-[22px] shrink-0 items-center bg-[#d24726] pb-px pl-[8px] pr-[16px] font-['Open_Sans',sans-serif] font-semibold text-white">
      <span>Folie 3 von 6</span>
      <button aria-label="Rechtschreibung" className="ml-[18px]">
        <Icon w={15} h={14}>
          <path d="M7 2.500C5 .8 3 .8.5 1v10.500c3 0 5 0 6.500 1.500 1-1.500 3-1.500 5.500-1.500V9M7 2.500V13M7 2.500C8 1 9 1 10 1M8.500 5.500l2 2.500 4-6" stroke="#fff" />
        </Icon>
      </button>
      <button className="ml-auto flex items-center gap-[6px]">
        <Icon w={11} h={12}>
          <path d="M0 5.500h11M0 8.500h11M0 11.500h7" stroke="#fff" />
          <path d="M3 3.500h5L5.500 0z" fill="#fff" />
        </Icon>
        Notizen
      </button>
      <div className="-mb-px ml-[19px] flex self-stretch">
        <button aria-label="Normal" className="flex w-[38px] items-center justify-center bg-[#b83b1d]">
          <Icon w={14} h={13}>
            <path d="M0 0h14v13H0z" fill="#fff" />
            <path d="M5 1.500h7.500v6H5zM5 9h7.500v2.500H5z" fill="#b83b1d" />
            <path d="M6.500 3h4.500v3H6.500z" fill="#fff" />
          </Icon>
        </button>
        <button aria-label="Foliensortierung" className="flex w-[38px] items-center justify-center">
          <Icon w={14} h={13}><path d="M0 0h6v5H0zM8 0h6v5H8zM0 8h6v5H0zM8 8h6v5H8z" fill="#fff" /></Icon>
        </button>
        <button aria-label="Leseansicht" className="flex w-[38px] items-center justify-center">
          <Icon w={13} h={13}>
            <path d="M6.500 1.500L5 .5H.5v10H5l1.500 1.500L8 10.500h4.500V.5H8zM6.500 1.500V13M2 3h3M2 5h3M2 7h3M2 9h3M8 3h3M8 5h3M8 7h3M8 9h3" stroke="#fff" />
          </Icon>
        </button>
        <button aria-label="Bildschirmpräsentation" className="flex w-[38px] items-center justify-center">
          <Icon w={14} h={13}><path d="M0 1h14M2 1.500v6h10v-6M4 4h6M7 8v4M4 12h6" stroke="#fff" strokeWidth="1.200" /></Icon>
        </button>
      </div>
      <button aria-label="Verkleinern" className="ml-[5px]"><Icon w={6} h={2}><path d="M0 0h6v2H0z" fill="#fff" /></Icon></button>
      <input
        type="range"
        aria-label="Zoom"
        value={zoom}
        onChange={(e) => setZoom(Number(e.target.value))}
        className="ml-[4px] h-[13px] w-[100px] appearance-none bg-[linear-gradient(#fff,#fff),linear-gradient(#fff,#fff)] bg-[length:100%_1px,1px_5px] bg-center bg-no-repeat [&::-webkit-slider-thumb]:h-[13px] [&::-webkit-slider-thumb]:w-[4px] [&::-webkit-slider-thumb]:appearance-none [&::-webkit-slider-thumb]:bg-white"
      />
      <button aria-label="Vergrößern" className="ml-[4px]"><Icon w={8} h={8}><path d="M3 0h2v3h3v2H5v3H3V5H0V3h3z" fill="#fff" /></Icon></button>
      <button className="ml-[16px] w-[27px] whitespace-nowrap text-left">65 %</button>
      <button aria-label="An Fenster anpassen" className="ml-[16px]">
        <Icon w={14} h={14}>
          <path d="M.5.5h12v12H.5z" stroke="#fff" />
          <path d="M6.500 2v3M5 3.500l1.500-1.500L8 3.500M6.500 11V8M5 9.500l1.500 1.500L8 9.500M2 6.500h3M3.500 5L2 6.500 3.500 8M11 6.500H8M9.500 5L11 6.500 9.500 8" stroke="#fff" />
        </Icon>
      </button>
    </footer>
  );
};

const App = () => {
  return (
    <div className="relative flex h-screen flex-col overflow-hidden border-t border-[#d24726] bg-white font-['Noto_Sans',sans-serif] text-[11px] text-[#333]">
      <TitleBar />
      <TabBar />
      <Ribbon />
      <div className="flex min-h-0 flex-1">
        <SlideList />
        <Editor />
      </div>
      <StatusBar />
      <ContextMenu />
    </div>
  );
};

export default App;
